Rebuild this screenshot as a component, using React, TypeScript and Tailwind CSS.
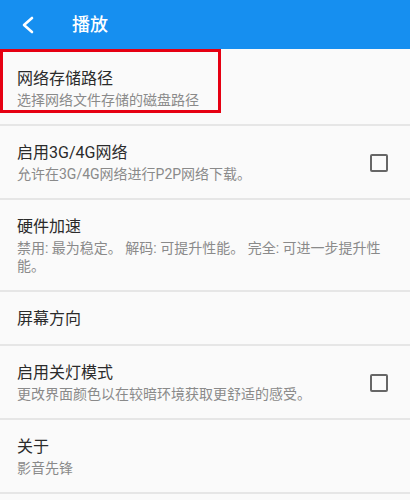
type Pref = {
  title: string;
  summary?: string;
  checkbox?: boolean;
};

const prefs: Pref[] = [
  { title: "启用3G/4G网络", summary: "允许在3G/4G网络进行P2P网络下载。", checkbox: true },
  {
    title: "硬件加速",
    summary: "禁用: 最为稳定。 解码: 可提升性能。 完全: 可进一步提升性能。",
  },
  { title: "屏幕方向" },
  { title: "启用关灯模式", summary: "更改界面颜色以在较暗环境获取更舒适的感受。", checkbox: true },
  { title: "关于", summary: "影音先锋" },
];

const font = { fontFamily: '"Roboto", "Noto Sans CJK SC", sans-serif' };

const Row = ({ pref }: { pref: Pref }) => (
  <div className="flex items-center border-b-2 border-[#e6e6e6] pl-[17px] pr-[22px] pt-[17px] pb-[15px]">
    <div className="flex-1 pr-[6px]">
      <div className="text-[16px] leading-[20px] text-[#2b2b2b]">{pref.title}</div>
      {pref.summary && (
        <div className="mt-[2px] text-[14px] leading-[18px] text-[#8a8a8a]">{pref.summary}</div>
      )}
    </div>
    {pref.checkbox && (
      <div className="ml-4 h-[18px] w-[18px] rounded-[2px] border-2 border-[#666666]" />
    )}
  </div>
);

export default function App() {
  return (
    <div className="min-h-[500px] w-[410px] bg-[#fafafa]" style={font}>
      <header className="flex h-[49px] items-center bg-[#168ff0] text-white">
        {/* back arrow */}
        <svg className="ml-[21px] h-[18px] w-[14px]" viewBox="0 0 14 18" fill="none">
          <polyline points="11,2 3,9 11,16" stroke="white" strokeWidth="2.6" strokeLinecap="round" strokeLinejoin="round" />
        </svg>
        <span className="ml-[37px] text-[18px] font-medium">播放</span>
      </header>

      <div className="relative border-b-2 border-[#e6e6e6] pl-[17px] pr-[22px] pt-[20px] pb-[15px]">
        <div className="text-[16px] leading-[20px] text-[#2b2b2b]">网络存储路径</div>
        <div className="mt-[2px] text-[14px] leading-[18px] text-[#8a8a8a]">选择网络文件存储的磁盘路径</div>
        <div className="absolute left-0 top-0 h-[64px] w-[221px] border-[3px] border-[#e60012]" />
      </div>

      {prefs.map((p) => (
        <Row key={p.title} pref={p} />
      ))}
    </div>
  );
}
